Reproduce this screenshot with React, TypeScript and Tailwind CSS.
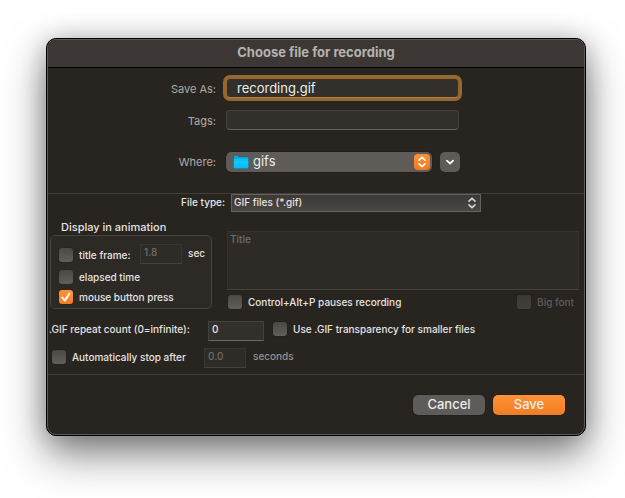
import React from "react";

const TINY = "text-[10px] leading-[14px] font-medium";
const CHECK =
  "h-[14px] w-[14px] shrink-0 appearance-none rounded-[3px] bg-linear-to-b from-[#4c4845] to-[#625e5b] shadow-[0_0_1px_rgba(0,0,0,0.6)] checked:from-[#ff9336] checked:to-[#f57d20] disabled:from-[#3a3734] disabled:to-[#43403d]";
const FIELD =
  "h-5 appearance-none border border-[#45423e] border-b-[#6b6865] bg-[#33302c] px-[3px] pb-1 text-[10px] leading-[14px] font-medium text-[#e4e3e2] outline-none disabled:border-[#393632] disabled:border-b-[#45423e] disabled:bg-[#2f2c28] disabled:text-[#6d6b68]";

function UpDown({ className }: { className: string }) {
  return (
    <svg viewBox="0 0 10 12" className={className} fill="none" stroke="currentColor" strokeWidth="1.6" strokeLinecap="round" strokeLinejoin="round" aria-hidden="true">
      <path d="M2 4.2 5 1.4 8 4.2M2 7.8 5 10.6 8 7.8" />
    </svg>
  );
}

function Folder() {
  return (
    <svg viewBox="0 0 16 14" className="pointer-events-none absolute top-[3px] left-[7px] h-[14px] w-4" aria-hidden="true">
      <defs>
        <linearGradient id="folder" x1="0" y1="0" x2="0" y2="1">
          <stop offset="0" stopColor="#08bdf4" />
          <stop offset="0.4" stopColor="#10cbfc" />
          <stop offset="1" stopColor="#0cb6f0" />
        </linearGradient>
      </defs>
      <path d="M.5 1.2Q.5.2 1.5.2H5L6.2 1.7H14.6Q15.6 1.7 15.6 2.7V13Q15.6 14 14.6 14H1.5Q.5 14 .5 13Z" fill="#3d4a50" />
      <path d="M.8 1.5Q.8.6 1.7.6H4.8L6 2.1H14.4Q15.3 2.1 15.3 3V12.6Q15.3 13.4 14.4 13.4H1.7Q.8 13.4.8 12.6Z" fill="#08a3da" />
      <path d="M.8 3.6H15.3V12.5Q15.3 13.3 14.4 13.3H1.7Q.8 13.3.8 12.5Z" fill="url(#folder)" />
    </svg>
  );
}

function Check({ label, checked, disabled }: { label: string; checked?: boolean; disabled?: boolean }) {
  return (
    <label className={`relative flex items-center gap-[6px] ${TINY} ${disabled ? "text-[#5f5c59]" : "text-[#e4e3e2]"}`}>
      <input type="checkbox" defaultChecked={checked} disabled={disabled} className={CHECK} />
      {checked && (
        <svg viewBox="0 0 14 14" className="pointer-events-none absolute top-0 left-0 h-[14px] w-[14px]" fill="none" stroke="#fff" strokeWidth="1.9" strokeLinecap="round" strokeLinejoin="round" aria-hidden="true">
          <path d="M3.3 7.6 5.8 10.6 10.6 3.4" />
        </svg>
      )}
      {label}
    </label>
  );
}

export default function App() {
  return (
    <main className="bg-white pt-[38px] pr-[39px] pb-[62px] pl-[46px] font-[Inter,'Liberation_Sans',sans-serif]">
      <div role="dialog" aria-labelledby="heading" className="rounded-[10px] border border-black bg-black shadow-[0_18px_40px_rgba(0,0,0,0.5),0_0_24px_rgba(0,0,0,0.2)]">
        <div className="overflow-hidden rounded-[9px] border border-[#5c5a57] bg-[#282520]">
          <h1 id="heading" className="h-7 border-b border-black bg-[#3c3735] pt-[2px] text-center text-[13px] leading-5 font-bold text-[#b5b2b0]">
            Choose file for recording
          </h1>

          <section className="grid grid-cols-[168px_1fr] gap-x-[10px] border-b border-[#413e3b] pt-[10px] pb-[21px] text-[11px] leading-5 text-[#aeacaa]">
            <label htmlFor="save" className="pt-px text-right">Save As:</label>
            <input id="save" defaultValue="recording.gif" className="mb-3 h-5 w-[233px] rounded-[4px] border border-[#966830] border-b-[#b58548] bg-[#33302c] px-[10px] text-[13px] text-[#ececeb] ring-3 ring-[#966830] outline-none" />
            <label htmlFor="tags" className="pt-px text-right">Tags:</label>
            <input id="tags" className="mb-[22px] h-5 w-[233px] rounded-[4px] border border-[#45423e] border-b-[#65625f] bg-[#33302c] px-2 text-[13px] outline-none" />
            <label htmlFor="where" className="text-right">Where:</label>
            <div className="flex gap-2">
              <div className="relative">
                <select id="where" className="block h-5 w-[206px] appearance-none rounded-[5px] bg-[#5f5b58] pr-6 pb-px pl-[27px] text-[13px] leading-[19px] text-[#ececeb] shadow-[0_0_1px_#000] outline-none">
                  <option>gifs</option>
                </select>
                <Folder />
                <span className="pointer-events-none absolute top-[2px] right-[2px] grid h-4 w-4 place-items-center rounded-[4px] bg-linear-to-b from-[#ff9336] to-[#ee7a22] text-white">
                  <UpDown className="h-3 w-[10px]" />
                </span>
              </div>
              <button type="button" aria-label="Expand" className="grid h-5 w-5 place-items-center rounded-[5px] bg-[#5f5b58] text-white">
                <svg viewBox="0 0 10 10" className="h-[10px] w-[10px]" fill="none" stroke="currentColor" strokeWidth="1.8" strokeLinecap="round" strokeLinejoin="round" aria-hidden="true">
                  <path d="M2 3.7 5 6.6 8 3.7" />
                </svg>
              </button>
            </div>
          </section>

          <section className={`border-b border-[#413e3b] pb-[6px] text-[#e4e3e2] ${TINY}`}>
            <div className="grid grid-cols-[177px_1fr] gap-x-[6px]">
              <label htmlFor="type" className="pt-px text-right">File type:</label>
              <div className="relative w-[250px]">
                <select id="type" className="block h-[18px] w-full appearance-none border border-[#65625f] bg-linear-to-b from-[#3d3936] to-[#4a4643] pr-5 pb-px pl-[2px] text-[10px] leading-[15px] font-medium outline-none">
                  <option>GIF files (*.gif)</option>
                </select>
                <UpDown className="pointer-events-none absolute top-[3px] right-1 h-3 w-[10px] text-[#d8d6d5]" />
              </div>
            </div>

            <div className="flex gap-[15px] pr-[5px] pl-[2px]">
              <div className="w-[162px] shrink-0 pt-2">
                <h2 id="group" className="pl-[11px] text-[11px] leading-[15px] font-medium">Display in animation</h2>
                <div role="group" aria-labelledby="group" className="h-[74px] rounded-[5px] border border-[#46433f] bg-[#2d2a26] pt-2 pl-2">
                  <div className="flex h-5 items-start">
                    <div className="w-[81px] pt-1"><Check label="title frame:" /></div>
                    <input id="secs" aria-label="Title frame duration" disabled defaultValue="1.8" className={`${FIELD} w-[42px]`} />
                    <label htmlFor="secs" className="pt-[2px] pl-[6px]">sec</label>
                  </div>
                  <div className="mt-[6px]"><Check label="elapsed time" /></div>
                  <div className="mt-[6px]"><Check label="mouse button press" checked /></div>
                </div>
              </div>
              <div className="flex-1 pt-[19px]">
                <textarea aria-label="Title" disabled placeholder="Title" className="block h-[59px] w-full resize-none border border-[#35322e] border-b-[#45423e] bg-[#2e2b27] px-[2px] outline-none placeholder:text-[#6d6b68]" />
                <div className="mt-[5px] flex justify-between pr-[5px] pl-px">
                  <Check label="Control+Alt+P pauses recording" />
                  <Check label="Big font" disabled />
                </div>
              </div>
            </div>

            <div className="mt-3 flex">
              <label htmlFor="repeat" className="w-[160px] pt-px pl-px">.GIF repeat count (0=infinite):</label>
              <input id="repeat" defaultValue="0" className={`${FIELD} w-14`} />
              <div className="pt-px pl-[9px]"><Check label="Use .GIF transparency for smaller files" /></div>
            </div>
            <div className="mt-[7px] flex pl-1">
              <div className="w-[152px] pt-[2px]"><Check label="Automatically stop after" /></div>
              <input id="stop" aria-label="Stop after seconds" disabled defaultValue="0.0" className={`${FIELD} w-[42px]`} />
              <label htmlFor="stop" className="pt-px pl-[7px] text-[#94918f]">seconds</label>
            </div>
          </section>

          <footer className="flex justify-end gap-2 pt-5 pr-[19px] pb-[19px] text-[13px] leading-[19px] font-medium text-[#ececeb]">
            <button type="button" className="h-5 w-[72px] rounded-[5px] bg-[#5f5b58] pb-px shadow-[0_0_1px_#000]">Cancel</button>
            <button type="button" className="h-5 w-[72px] rounded-[5px] bg-linear-to-b from-[#ff9233] to-[#f07d26] pb-px shadow-[0_0_1px_#000]">Save</button>
          </footer>
        </div>
      </div>
    </main>
  );
}
